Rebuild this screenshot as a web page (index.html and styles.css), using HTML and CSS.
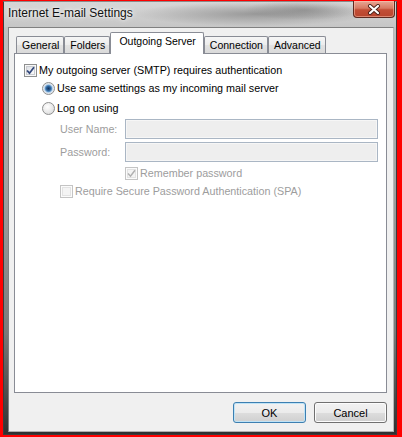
FILE: index.html
```html
<!DOCTYPE html>
<html>
<head>
<meta charset="utf-8">
<link rel="stylesheet" href="styles.css">
</head>
<body>
<div class="window">
  <div class="titlebar">
    <span class="title">Internet E-mail Settings</span>
    <div class="close">
      <svg width="14" height="11" viewBox="0 0 14 11">
        <path d="M3 2 L11 9 M11 2 L3 9" stroke="#4a2018" stroke-width="4" stroke-linecap="round"/>
        <path d="M3 2 L11 9 M11 2 L3 9" stroke="#ffffff" stroke-width="2.2" stroke-linecap="round"/>
      </svg>
    </div>
  </div>
  <div class="client">
    <div class="tabs">
      <div class="tab">General</div>
      <div class="tab">Folders</div>
      <div class="tab tab-active">Outgoing Server</div>
      <div class="tab">Connection</div>
      <div class="tab">Advanced</div>
    </div>
    <div class="panel">
      <div class="row row-auth">
        <span class="cb"><svg class="tick" width="9" height="9" viewBox="0 0 9 9"><path d="M1 4.5 L3.5 7.2 L8 1.2" stroke="#34497c" stroke-width="1.8" fill="none"/></svg></span>
        <span>My outgoing server (SMTP) requires authentication</span>
      </div>
      <div class="row row-same">
        <span class="rb rb-on"></span>
        <span>Use same settings as my incoming mail server</span>
      </div>
      <div class="row row-logon">
        <span class="rb"></span>
        <span>Log on using</span>
      </div>
      <div class="field field-user">
        <span class="flabel">User Name:</span>
        <span class="input"></span>
      </div>
      <div class="field field-pass">
        <span class="flabel">Password:</span>
        <span class="input"></span>
      </div>
      <div class="row row-remember disabled">
        <span class="cb cb-dis"><svg class="tick" width="9" height="9" viewBox="0 0 9 9"><path d="M1 4.5 L3.5 7.2 L8 1.2" stroke="#b0b0b0" stroke-width="1.5" fill="none"/></svg></span>
        <span>Remember password</span>
      </div>
      <div class="row row-spa disabled">
        <span class="cb cb-dis"></span>
        <span>Require Secure Password Authentication (SPA)</span>
      </div>
    </div>
    <div class="buttons">
      <div class="btn btn-default">OK</div>
      <div class="btn">Cancel</div>
    </div>
  </div>
</div>
</body>
</html>
```

FILE: styles.css
```css
html, body {
  margin: 0;
  padding: 0;
}
body {
  width: 402px;
  height: 437px;
  overflow: hidden;
  background: #ff0000;
  padding: 1px 0 0 3px;
  box-sizing: border-box;
  font-family: "Liberation Sans", Arial, sans-serif;
  font-size: 10.75px;
  color: #000;
}
.window {
  width: 394px;
  height: 434px;
  box-sizing: border-box;
  border: 1px solid #3c3c3c;
  border-top-color: #8a8a8a;
  background: linear-gradient(to bottom, #c9c9c9 0, #bcbcbc 40px, #a2a2a2 180px, #7a7a7a 330px, #303030 100%);
  display: flex;
  flex-direction: column;
}
.titlebar {
  height: 25px;
  display: flex;
  align-items: flex-start;
  padding-left: 4px;
  background:
    radial-gradient(ellipse 120px 12px at 250px 12px, rgba(110,110,110,0.55), rgba(110,110,110,0)),
    radial-gradient(ellipse 60px 10px at 300px 8px, rgba(90,90,90,0.4), rgba(90,90,90,0)),
    linear-gradient(to bottom, #d6d6d6 0, #c6c6c6 100%);
}
.title {
  font-size: 12px;
  line-height: 14px;
  padding-top: 4px;
  color: #111;
  text-shadow: 0 0 6px rgba(255,255,255,0.9), 0 0 3px rgba(255,255,255,0.9);
}
.close {
  margin-left: auto;
  margin-right: 1px;
  margin-top: -1px;
  width: 42px;
  height: 17px;
  box-sizing: border-box;
  border: 1px solid #5e2a20;
  border-top: none;
  border-radius: 0 0 4px 4px;
  background: linear-gradient(to bottom, #e7a896 0, #d77a63 45%, #c24e36 55%, #b8452e 100%);
  box-shadow: inset 0 0 0 1px rgba(255,200,180,0.5);
  display: flex;
  align-items: center;
  justify-content: center;
}
.client {
  margin: 0 2px 0 4px;
  height: 405px;
  box-sizing: border-box;
  border: 1px solid #808080;
  border-right-color: #b8b8b8;
  border-bottom-color: #b0b0b0;
  background: #f0f0f0;
  padding-top: 5px;
}
.tabs {
  display: flex;
  align-items: flex-end;
  height: 20px;
  margin-left: 7px;
  position: relative;
  z-index: 1;
}
.tab {
  height: 17px;
  box-sizing: border-box;
  border: 1px solid #898c95;
  border-bottom: none;
  border-radius: 2px 2px 0 0;
  padding: 2px 4px 0 5px;
  font-size: 10.5px;
  line-height: 13px;
  background: linear-gradient(to bottom, #f6f6f6 0, #ececec 50%, #e2e2e2 51%, #dadada 100%);
  color: #000;
  white-space: nowrap;
}
.tab-active {
  height: 22px;
  margin-bottom: -1px;
  padding: 2px 7px 0 8px;
  background: #ffffff;
}
.panel {
  margin: 0 6px 0 5px;
  height: 340px;
  box-sizing: border-box;
  border: 1px solid #898c95;
  background: #ffffff;
}
.row {
  display: flex;
  align-items: center;
  height: 16px;
  gap: 2px;
  white-space: nowrap;
}
.row-auth { margin-top: 8px; padding-left: 9px; }
.row-same { margin-top: 2px; padding-left: 27px; }
.row-logon { margin-top: 4px; padding-left: 27px; }
.row-remember { margin-top: 3px; padding-left: 110px; }
.row-spa { margin-top: 2px; padding-left: 45px; }
.disabled { color: #9d9d9d; }

.cb {
  width: 13px;
  height: 13px;
  box-sizing: border-box;
  border: 1px solid #8e8f8f;
  background: linear-gradient(135deg, #d4d8de 0, #f2f3f5 60%, #fdfdfd 100%);
  box-shadow: inset 0 0 0 1px #f8f8f8, inset 0 0 0 2px #c9ccd1;
  display: flex;
  align-items: center;
  justify-content: center;
  flex: none;
}
.cb-dis {
  border-color: #c4c4c4;
  background: #f4f4f4;
  box-shadow: inset 0 0 0 1px #fbfbfb, inset 0 0 0 2px #e3e3e3;
}
.tick { display: block; }
.rb {
  width: 13px;
  height: 13px;
  box-sizing: border-box;
  border: 1px solid #8e8f8f;
  border-radius: 50%;
  background: radial-gradient(circle at 40% 35%, #ffffff 0, #e6e6e6 60%, #cfcfcf 100%);
  flex: none;
}
.rb-on {
  background: radial-gradient(circle at 50% 50%, #17355f 0, #2a5f96 2px, #5f95c8 3.2px, #c8dbee 4.2px, #ececec 5.5px);
}
.field {
  display: flex;
  align-items: center;
  height: 20px;
  margin-top: 3px;
  padding-left: 45px;
}
.flabel {
  width: 65px;
  color: #9d9d9d;
  white-space: nowrap;
}
.input {
  width: 253px;
  height: 20px;
  box-sizing: border-box;
  border: 1px solid #aab6c4;
  background: #eeeeee;
  box-shadow: inset 0 0 0 1px #f6f6f6;
}
.buttons {
  display: flex;
  justify-content: flex-end;
  gap: 8px;
  margin: 9px 6px 0 0;
}
.btn {
  width: 73px;
  height: 21px;
  box-sizing: border-box;
  border: 1px solid #707070;
  border-radius: 3px;
  background: linear-gradient(to bottom, #f2f2f2 0, #ebebeb 50%, #dddddd 51%, #cfcfcf 100%);
  box-shadow: inset 0 0 0 1px #fcfcfc;
  display: flex;
  align-items: center;
  justify-content: center;
  font-size: 11px;
  color: #000;
}
.btn-default {
  border-color: #3c7fb1;
  box-shadow: inset 0 0 0 1px #bfe3f6;
}
```
